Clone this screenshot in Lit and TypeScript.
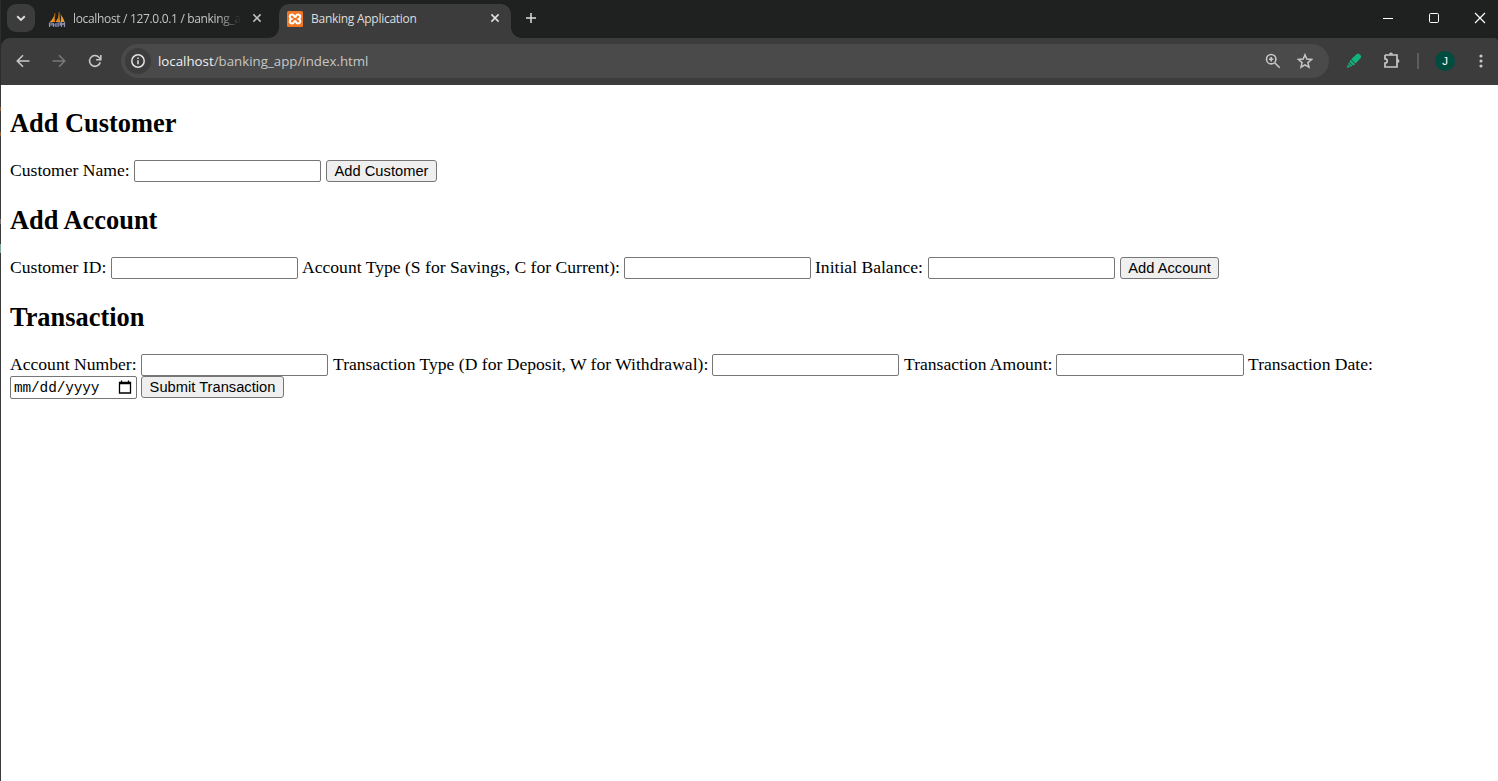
import { LitElement, html, css, svg } from "lit";
import { customElement } from "lit/decorators.js";

const icon = (size: number, body: unknown) =>
  html`<svg width=${size} height=${size} viewBox="0 0 ${size} ${size}" fill="none" stroke="currentColor">${body}</svg>`;

@customElement("browser-tabs")
export class BrowserTabs extends LitElement {
  static styles = css`
    :host { display: flex; height: 38px; background: #1f2120; color: #dedede; font: 12px/16px "Open Sans", "Noto Sans", sans-serif; letter-spacing: -0.27px; }
    svg { display: block; flex: none; }
    .search { width: 28px; height: 28px; margin: 4px 8px 0 6px; border-radius: 9px; background: #3c3c3c; display: grid; place-items: center; }
    .tab { display: flex; align-items: center; margin-top: 4px; padding-bottom: 4px; box-sizing: border-box; height: 34px; }
    .idle { width: 236px; padding-left: 5px; color: #c4c4c4; box-sizing: border-box; }
    .active { position: relative; width: 232px; padding-left: 8px; background: #3c3c3c; border-radius: 10px 10px 0 0; }
    .active::before, .active::after { content: ""; position: absolute; bottom: 0; width: 10px; height: 10px; }
    .active::before { left: -10px; background: radial-gradient(circle at 0 0, #1f2120 9.5px, #3c3c3c 10px); }
    .active::after { right: -10px; background: radial-gradient(circle at 100% 0, #1f2120 9.5px, #3c3c3c 10px); }
    .title { margin-left: 8px; white-space: nowrap; }
    .idle .title { margin-left: 7px; width: 172px; letter-spacing: -0.33px; -webkit-mask-image: linear-gradient(to right, #000 145px, transparent 168px); mask-image: linear-gradient(to right, #000 145px, transparent 168px); }
    .active .title { width: 174px; }
    .close { margin-left: 6px; }
    .active .close { margin-left: 4px; color: #e3e3e3; }
    .active .close, .idle .close { margin-top: -2px; }
    .plus { margin: 12px 0 0 14px; }
    .controls { display: flex; margin-left: auto; padding-top: 12px; gap: 34px; padding-right: 12px; color: #fff; }
  `;
  render() {
    const close = icon(12, svg`<path d="M2.400 2.400 9.600 9.600M9.600 2.400 2.400 9.600" stroke-width="1.500"/>`);
    return html`
      <div class="search">${icon(12, svg`<path d="M2.200 4.300 6 8l3.800-3.700" stroke-width="1.900"/>`)}</div>
      <div class="tab idle">
        <svg width="18" height="18" viewBox="0 0 18 18">
          <path d="M6.500 2C7 6 4 10 1.500 12H7zM11 1c.500 4-1 8-3.500 11H12zM12.300 4c1 3 1 5 .200 8H16.500C16 9 14 6 12.300 4z" fill="#f29a25"/>
          <path d="M7 3 6 12M11.200 2 10 12" stroke="#c56a14" stroke-width=".8"/>
          <path d="M1.500 17v-4h2.500v2H1.500m4 2v-4m0 2h2.500m0-2v4m2 0v-4h2.500v2H10m3.500 2v-4l1.500 1.500 1.500-1.500v4" fill="none" stroke="#8e90b8" stroke-width="1.200"/>
        </svg>
        <span class="title">localhost / 127.0.0.1 / banking_a</span><span class="close">${close}</span>
      </div>
      <div class="tab active">
        <svg width="16" height="16" viewBox="0 0 16 16">
          <rect width="16" height="16" rx="1.500" fill="#f37623"/>
          <path d="M5.200 3.500C2.200 3.500 2 7 4.200 8 2 9 2.200 12.500 5.200 12.500c2 0 1.600-2.500 2.800-2.500s.8 2.500 2.800 2.500c3 0 3.200-3.500 1-4.500 2.200-1 2-4.500-1-4.500-2 0-1.600 2.500-2.800 2.500s-.8-2.500-2.800-2.500z" fill="none" stroke="#fff" stroke-width="2"/>
        </svg>
        <span class="title">Banking Application</span><span class="close">${close}</span>
      </div>
      <div class="plus">${icon(12, svg`<path d="M6 1v10M1 6h10" stroke-width="1.500"/>`)}</div>
      <div class="controls">
        ${icon(12, svg`<path d="M1 6.500h10"/>`)}
        ${icon(12, svg`<rect x="1.500" y="1.500" width="9" height="9" rx="1.200"/>`)}
        ${icon(12, svg`<path d="m1 1 10 10M11 1 1 11" stroke-width="1.200"/>`)}
      </div>`;
  }
}

@customElement("browser-toolbar")
export class BrowserToolbar extends LitElement {
  static styles = css`
    :host { display: block; background: #1f2120; }
    .bar { display: flex; align-items: center; height: 47px; box-sizing: border-box; background: #3c3c3c; border-radius: 9px 4px 0 0; color: #c7c7c7; padding: 0 8px 1px 14px; }
    svg { display: block; flex: none; }
    .nav { display: flex; gap: 20px; width: 106px; }
    .dim { color: #787878; }
    .address { display: flex; align-items: center; width: 1208px; height: 34px; border-radius: 17px; background: #4a4a4a; font: 13.300px/18px "Open Sans", "Noto Sans", sans-serif; box-sizing: border-box; padding: 0 16px 0 4px; }
    .info { width: 26px; height: 26px; border-radius: 50%; background: #3c3c3c; display: grid; place-items: center; margin-right: 7px; color: #e3e3e3; }
    .url { flex: 1; color: #c7c7c7; }
    .host { color: #f0f0f0; }
    .star { margin-left: 16px; }
    .pen { margin-left: 17px; }
    .puzzle { margin-left: 20px; }
    .divider { width: 2px; height: 16px; margin: 0 16px 0 17px; background: #5c5c5c; }
    .avatar { width: 20px; height: 20px; border-radius: 50%; background: #004d40; color: #fff; font: 11.500px/20px "Liberation Sans", sans-serif; text-align: center; margin-right: 17px; }
  `;
  render() {
    return html`<div class="bar">
      <div class="nav">
        ${icon(16, svg`<path d="M14.500 8H2.500M8 2.300 2.300 8 8 13.700" stroke-width="1.600"/>`)}
        <span class="dim">${icon(16, svg`<path d="M1.500 8h12M8 2.300 13.700 8 8 13.700" stroke-width="1.600"/>`)}</span>
        ${icon(16, svg`<path d="M13.200 9.200A5.400 5.400 0 1 1 12.100 4.500L13.500 6M13.800 2v4.700H9.100" stroke-width="1.600"/>`)}
      </div>
      <div class="address">
        <div class="info">${icon(16, svg`<circle cx="8" cy="8" r="6.200" stroke-width="1.500"/><path d="M8 7.200v4M8 4.500v1.600" stroke-width="1.500"/>`)}</div>
        <div class="url"><span class="host">localhost</span>/banking_app/index.html</div>
        ${icon(16, svg`<circle cx="6.200" cy="6.200" r="4.700" stroke-width="1.600"/><path d="m9.700 9.700 5 5M6.200 4v4.400M4 6.200h4.400" stroke-width="1.600"/>`)}
        <span class="star">${icon(16, svg`<path d="m8 1.800 1.800 4.300 4.700.4-3.600 3.100 1.100 4.600L8 11.800l-4 2.400 1.100-4.600-3.600-3.100 4.700-.4z" stroke-width="1.500"/>`)}</span>
      </div>
      <svg class="pen" width="16" height="16" viewBox="0 0 16 16" fill="#10b57d"><path d="M10.800 1Q12 0 13.200 1L14.800 2.600Q15.800 3.900 14.700 5L9.600 10.600 5.200 6.200zM4.700 6.800l4.400 4.400-2 1.300-3.700-3.700zM3.100 9.600l3.200 3.200-1.200.900-2.900-2.900zM1.700 11.400l2.700 2.700-3.600.600z"/></svg>
      <span class="puzzle">${icon(18, svg`<path d="M3 3h12v3.500M15 11v4H3v-3.800a2.200 2.200 0 0 0 0-4.400V3M15 6.500v5" stroke-width="1.700"/><path d="M7 2.600a2 2 0 0 1 4 0zM15.400 7a2 2 0 0 1 0 4z" fill="currentColor" stroke="none"/>`)}</span>
      <span class="divider"></span>
      <span class="avatar">J</span>
      <svg width="18" height="18" viewBox="0 0 18 18" fill="#c7c7c7"><circle cx="9" cy="4" r="1.600"/><circle cx="9" cy="9" r="1.600"/><circle cx="9" cy="14" r="1.600"/></svg>
    </div>`;
  }
}

@customElement("banking-page")
export class BankingPage extends LitElement {
  static styles = css`
    :host { display: block; flex: 1; background: linear-gradient(#3c3c3c 22px, #8a5b3e 22px 26px, #3c3c3c 26px 47px, #8a5b3e 47px 51px, #3c3c3c 51px 134px, #77706f 134px 139px, #3c3c3c 139px 159px, #7fa99b 159px 168px, #3c3c3c 168px) 0 0 / 1px 100% no-repeat #fff; color: #000; padding: 23px 9px 0 10px; font: 17.600px/20px "Liberation Serif", serif; }
    h2 { font-size: 26.400px; line-height: 31px; margin: 0 0 21px; }
    .row { display: flex; height: 22px; margin-bottom: 23px; white-space: nowrap; }
    .row.tight { margin-bottom: 0; }
    label { flex: none; }
    input { flex: none; width: 187px; height: 22px; box-sizing: border-box; border: 1px solid #767676; border-radius: 2px; margin: 0 5px 0 0; padding: 1px 2px; background: #fff; }
    .snug { margin-right: 4px; }
    .wide { width: 188px; margin-right: 4px; }
    button { height: 22px; box-sizing: border-box; border: 1px solid #767676; border-radius: 3px; margin: 0; padding: 0; background: #efefef; color: #000; font: 14.667px/17px "Liberation Sans", sans-serif; letter-spacing: 0.02px; }
    .w124 { width: 124px; } .w101 { width: 101px; } .w322 { width: 322px; } .w112 { width: 113px; }
    .w131 { width: 131px; } .w379 { width: 379px; } .w152 { width: 152px; }
    .b111 { width: 111px; } .b99 { width: 99px; } .b143 { width: 143px; }
    .date { display: flex; align-items: center; justify-content: space-between; width: 127px; height: 23px; box-sizing: border-box; border: 1px solid #767676; border-radius: 2px; margin-right: 4px; padding: 0 4px 0 3px; font: 14.400px/18px "Liberation Mono", monospace; letter-spacing: -0.1px; }
  `;
  render() {
    return html`
      <h2>Add Customer</h2>
      <div class="row"><label class="w124">Customer Name:</label><input /><button class="b111">Add Customer</button></div>
      <h2>Add Account</h2>
      <div class="row">
        <label class="w101">Customer ID:</label><input class="snug" />
        <label class="w322">Account Type (S for Savings, C for Current):</label><input class="snug" />
        <label class="w112">Initial Balance:</label><input /><button class="b99">Add Account</button>
      </div>
      <h2>Transaction</h2>
      <div class="row tight">
        <label class="w131">Account Number:</label><input />
        <label class="w379">Transaction Type (D for Deposit, W for Withdrawal):</label><input />
        <label class="w152">Transaction Amount:</label><input class="wide" />
        <label>Transaction Date:</label>
      </div>
      <div class="row">
        <div class="date"><span>mm/dd/yyyy</span>
          <svg width="14" height="15" viewBox="0 0 14 15"><path d="M1.500 2.500h11v10.500h-11zM1 3.500h12M3.500.500v2M10.500.500v2" fill="none" stroke="#000" stroke-width="1.300"/></svg>
        </div>
        <button class="b143">Submit Transaction</button>
      </div>`;
  }
}

@customElement("app-root")
export class AppRoot extends LitElement {
  static styles = css`
    :host { display: flex; flex-direction: column; width: 1498px; height: 781px; overflow: hidden; }
    .chrome { padding-left: 1px; background: #2b2d2c; }
  `;
  render() {
    return html`<div class="chrome"><browser-tabs></browser-tabs><browser-toolbar></browser-toolbar></div><banking-page></banking-page>`;
  }
}
